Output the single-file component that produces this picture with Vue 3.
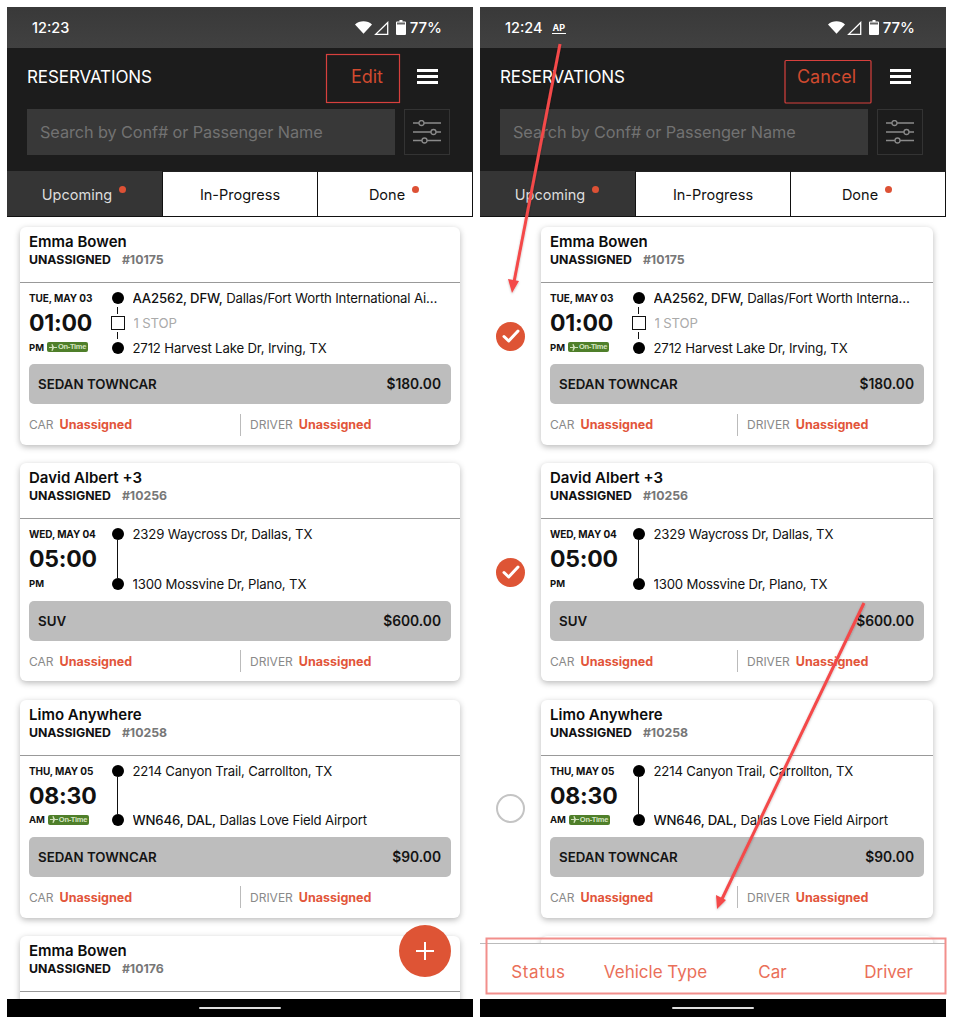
<script setup>
const reservations = [
  { id: 1, name: 'Emma Bowen', conf: '#10175', date: 'TUE, MAY 03', time: '01:00', ampm: 'PM', onTime: true,
    from: { bold: 'AA2562, DFW,', text: ' Dallas/Fort Worth International Airport' }, stop: '1 STOP',
    to: { bold: '', text: '2712 Harvest Lake Dr, Irving, TX' }, vehicle: 'SEDAN TOWNCAR', price: '$180.00', pick: 'on' },
  { id: 2, name: 'David Albert +3', conf: '#10256', date: 'WED, MAY 04', time: '05:00', ampm: 'PM', onTime: false,
    from: { bold: '', text: '2329 Waycross Dr, Dallas, TX' }, stop: '',
    to: { bold: '', text: '1300 Mossvine Dr, Plano, TX' }, vehicle: 'SUV', price: '$600.00', pick: 'on' },
  { id: 3, name: 'Limo Anywhere', conf: '#10258', date: 'THU, MAY 05', time: '08:30', ampm: 'AM', onTime: true,
    from: { bold: '', text: '2214 Canyon Trail, Carrollton, TX' }, stop: '',
    to: { bold: 'WN646, DAL,', text: ' Dallas Love Field Airport' }, vehicle: 'SEDAN TOWNCAR', price: '$90.00', pick: 'off' },
  { id: 4, name: 'Emma Bowen', conf: '#10176', peek: true, pick: 'none' },
]
const screens = [
  { id: 'list', clock: '12:23', editing: false },
  { id: 'edit', clock: '12:24', editing: true },
]
const tabs = [
  { label: 'Upcoming', dot: true, active: true },
  { label: 'In-Progress', dot: false, active: false },
  { label: 'Done', dot: true, active: false },
]
const actions = ['Status', 'Vehicle Type', 'Car', 'Driver']
</script>

<template>
  <div class="page">
    <section v-for="s in screens" :key="s.id" class="phone" :class="{ editing: s.editing }">
      <div class="status">
        <div class="clock">
          <span>{{ s.clock }}</span>
          <span v-if="s.editing" class="ap">AP</span>
        </div>
        <div class="sys">
          <svg width="17" height="13" viewBox="0 0 18 13"><path d="M0 3.400C2.400 1.300 5.500 0 9 0s6.600 1.300 9 3.400L9 13z" fill="#fff"/></svg>
          <svg class="sig" width="15" height="14" viewBox="0 0 15 14"><path d="M13.700 1.500V13.300H1.700z" fill="none" stroke="#fff" stroke-width="1.300"/></svg>
          <svg class="batt" width="10" height="15" viewBox="0 0 10 15"><path d="M3.500 0h3v1.500h2.500a1 1 0 0 1 1 1V14a1 1 0 0 1-1 1H1a1 1 0 0 1-1-1V2.500a1 1 0 0 1 1-1h2.500z" fill="#fff"/><rect x="1" y="2.500" width="8" height="2" fill="#666"/></svg>
          <span class="pct">77%</span>
        </div>
      </div>

      <header class="head">
        <div class="title-row">
          <h1>RESERVATIONS</h1>
          <button class="edit">{{ s.editing ? 'Cancel' : 'Edit' }}</button>
          <span class="burger"><i></i><i></i><i></i></span>
        </div>
        <div class="search-row">
          <div class="search">Search by Conf# or Passenger Name</div>
          <div class="filter">
            <svg width="30" height="24" viewBox="0 0 30 24" fill="none" stroke="#8a8a8a" stroke-width="1.300">
              <path d="M1 3h6M12 3h17M1 12h18M24 12h5M1 20.500h9M15 20.500h14"/>
              <circle cx="9.500" cy="3" r="2.500"/><circle cx="21.500" cy="12" r="2.500"/><circle cx="12.500" cy="20.500" r="2.500"/>
            </svg>
          </div>
        </div>
      </header>

      <nav class="tabs">
        <div v-for="t in tabs" :key="t.label" class="tab" :class="{ active: t.active, 'has-dot': t.dot }">
          {{ t.label }}<span v-if="t.dot" class="dot"></span>
        </div>
      </nav>

      <div class="list">
        <div v-for="r in reservations" :key="r.id" class="row">
          <div v-if="s.editing" class="pick">
            <span v-if="r.pick === 'on'" class="checked">
              <svg width="18" height="14" viewBox="0 0 18 14" fill="none"><path d="M2 7.500l4.700 4.500L16 2" stroke="#fff" stroke-width="3" stroke-linecap="round" stroke-linejoin="round"/></svg>
            </span>
            <span v-else-if="r.pick === 'off'" class="unchecked"></span>
          </div>
          <article class="card">
            <div v-if="!(r.peek && s.editing)" class="card-top">
              <div class="name">{{ r.name }}</div>
              <div class="meta"><b>UNASSIGNED</b><span>{{ r.conf }}</span></div>
            </div>
            <template v-if="!r.peek">
              <div class="trip">
                <div class="when">
                  <div class="date">{{ r.date }}</div>
                  <div class="time">{{ r.time }}</div>
                  <div class="ampm">
                    {{ r.ampm }}
                    <span v-if="r.onTime" class="ontime">
                      <svg width="8" height="7" viewBox="0 0 8 7"><path d="M0 3h3L2.500 0h1l1.500 3h3v1H5L3.500 7h-1L3 4H0z" fill="#cfe0b8"/></svg>
                      On-Time
                    </span>
                  </div>
                </div>
                <div class="route">
                  <div class="stopline">
                    <span class="pin"></span>
                    <span class="addr"><b>{{ r.from.bold }}</b>{{ r.from.text }}</span>
                  </div>
                  <div class="link" :class="{ long: !r.stop }">
                    <template v-if="r.stop">
                      <span class="square"></span>
                      <span class="addr muted">{{ r.stop }}</span>
                    </template>
                  </div>
                  <div class="stopline">
                    <span class="pin"></span>
                    <span class="addr"><b>{{ r.to.bold }}</b>{{ r.to.text }}</span>
                  </div>
                </div>
              </div>
              <div class="vehicle"><span>{{ r.vehicle }}</span><span class="price">{{ r.price }}</span></div>
              <div class="assign">
                <div class="slot"><span>CAR</span><strong>Unassigned</strong></div>
                <div class="slot second"><span>DRIVER</span><strong>Unassigned</strong></div>
              </div>
            </template>
          </article>
        </div>
      </div>

      <button v-if="!s.editing" class="fab" aria-label="Add">
        <svg width="20" height="20" viewBox="0 0 20 20"><path d="M10 1v18M1 10h18" stroke="#fff" stroke-width="2"/></svg>
      </button>

      <div v-if="s.editing" class="actions">
        <span v-for="a in actions" :key="a">{{ a }}</span>
      </div>

      <div class="navbar"><i></i></div>
    </section>

    <svg class="notes" width="953" height="1024" viewBox="0 0 953 1024" fill="none">
      <defs>
        <filter id="soft" x="-20%" y="-20%" width="140%" height="140%">
          <feDropShadow dx="0" dy="1" stdDeviation="1" flood-color="#000" flood-opacity=".25"/>
        </filter>
      </defs>
      <rect x="326.500" y="54.500" width="73" height="48" stroke="#d7403d" stroke-width="1.200"/>
      <rect x="785" y="60.500" width="86" height="42.500" rx="1" stroke="#d7403d" stroke-width="1.200"/>
      <rect x="486.500" y="938.500" width="459" height="55" stroke="#f28f8c" stroke-width="2"/>
      <g filter="url(#soft)">
        <path d="M560 44L514 282" stroke="#f4484a" stroke-width="3"/>
        <path d="M508 279l11 2-7 12z" fill="#f4484a"/>
        <path d="M864 603L722 899" stroke="#f4484a" stroke-width="3"/>
        <path d="M716 895l10 5-9 9z" fill="#f4484a"/>
      </g>
    </svg>
  </div>
</template>

<style>
html, body { margin: 0; background: #fff; }
</style>

<style scoped>
.page {
  position: relative;
  width: 953px;
  height: 1024px;
  padding: 7px;
  box-sizing: border-box;
  display: flex;
  gap: 7px;
  overflow: hidden;
  background: #fff;
  font-family: Inter, "Liberation Sans", sans-serif;
  color: #111;
}
.phone {
  position: relative;
  width: 466px;
  height: 1010px;
  flex: none;
  display: flex;
  flex-direction: column;
  overflow: hidden;
  background: #fff;
}
.status {
  height: 41px;
  flex: none;
  display: flex;
  align-items: center;
  justify-content: space-between;
  padding: 0 31px 0 25px;
  background: linear-gradient(#393939, #414141);
  color: #fff;
  font-size: 14.500px;
  font-weight: 500;
}
.clock { display: flex; align-items: center; gap: 9px; }
.ap {
  font-size: 9px;
  font-weight: 700;
  line-height: 11px;
  padding: 0 1px;
  border-bottom: 1.500px solid #fff;
}
.sys { display: flex; align-items: center; }
.sig { margin-left: 2px; }
.batt { margin-left: 7px; }
.pct { margin-left: 4px; font-size: 15px; }

.head {
  height: 123px;
  flex: none;
  box-sizing: border-box;
  background: #1c1c1c;
  padding: 0 23px 0 20px;
}
.title-row {
  height: 61px;
  box-sizing: border-box;
  padding-bottom: 4px;
  display: flex;
  align-items: center;
}
h1 {
  margin: 0;
  flex: 1;
  font-size: 17px;
  font-weight: 400;
  color: #fff;
  letter-spacing: -0.100px;
}
.edit {
  border: 0;
  padding: 0;
  background: none;
  color: #d04a2f;
  font: 400 18px Inter, "Liberation Sans", sans-serif;
  white-space: nowrap;
}
.burger {
  display: flex;
  flex-direction: column;
  gap: 2.750px;
  width: 21px;
  margin: 0 12px 0 34px;
}
.burger i { display: block; height: 3px; background: #fff; }
.search-row { display: flex; gap: 9px; height: 46px; }
.search {
  flex: 1;
  background: #383838;
  color: #727272;
  font-size: 16.300px;
  line-height: 46px;
  padding-left: 13px;
  letter-spacing: -0.100px;
}
.filter {
  width: 46px;
  box-sizing: border-box;
  border: 1px solid #333;
  display: flex;
  align-items: center;
  justify-content: center;
}

.tabs {
  height: 46px;
  flex: none;
  display: grid;
  grid-template-columns: 155px 155px 156px;
  box-sizing: border-box;
  border-bottom: 1px solid #111;
  background: #1c1c1c;
}
.tab {
  display: flex;
  align-items: center;
  justify-content: center;
  box-sizing: border-box;
  background: #fff;
  border-top: 1px solid #222;
  border-left: 1px solid #111;
  font-size: 14.500px;
  color: #111;
}
.tab:last-child { border-right: 1px solid #111; }
.tab.has-dot { padding-right: 2px; }
.tab.active { background: #353535; color: #ddd; border-color: #353535; }
.dot {
  width: 7px;
  height: 7px;
  border-radius: 50%;
  background: #dd5135;
  margin: -9px 0 0 7px;
}

.list {
  flex: 1;
  min-height: 0;
  overflow: hidden;
  padding: 10px 13px 0;
  display: flex;
  flex-direction: column;
  gap: 18.400px;
}
.row { display: flex; flex: none; }
.editing .list { padding-left: 0; }
.pick {
  width: 61px;
  flex: none;
  display: flex;
  align-items: center;
  justify-content: center;
}
.checked {
  width: 29px;
  height: 29px;
  border-radius: 50%;
  background: #de5435;
  display: flex;
  align-items: center;
  justify-content: center;
}
.unchecked {
  width: 29px;
  height: 29px;
  box-sizing: border-box;
  border-radius: 50%;
  border: 2.500px solid #c4c4c4;
}
.card {
  flex: 1;
  min-width: 0;
  height: 218px;
  border-radius: 6px;
  background: #fff;
  box-shadow: 0 2px 6px rgba(0, 0, 0, .28);
  display: flex;
  flex-direction: column;
}
.card-top {
  height: 56px;
  flex: none;
  box-sizing: border-box;
  border-bottom: 1.500px solid #999;
  padding: 6px 9px 0;
}
.name { font-size: 15px; font-weight: 600; line-height: 17px; color: #0c0c0c; }
.meta { margin-top: 1px; font-size: 12.300px; line-height: 17px; }
.meta b { font-weight: 700; }
.meta span { margin-left: 11px; font-weight: 700; color: #777; }

.trip { display: flex; padding: 7px 9px 0; height: 81.300px; flex: none; box-sizing: border-box; }
.when { width: 82px; flex: none; }
.date { font-size: 10px; font-weight: 700; line-height: 14px; margin-top: 1px; letter-spacing: -.1px; white-space: nowrap; }
.time { font-size: 23px; font-weight: 700; line-height: 28px; margin-top: 4px; letter-spacing: -.2px; }
.ampm { display: flex; align-items: center; gap: 3px; font-size: 9.500px; font-weight: 700; line-height: 13px; margin-top: 3.500px; }
.ontime {
  display: inline-flex;
  align-items: center;
  gap: 1px;
  height: 10px;
  width: 41px;
  justify-content: center;
  border-radius: 2px;
  background: #4f7f2a;
  color: #d6e6c2;
  font: 700 7.500px/10px "Liberation Sans", sans-serif;
  letter-spacing: -.3px;
  white-space: nowrap;
}
.route { flex: 1; min-width: 0; }
.stopline, .link { display: flex; align-items: center; }
.stopline { height: 16px; }
.pin { width: 12px; height: 12px; border-radius: 50%; background: #000; flex: none; margin-left: .5px; }
.addr {
  margin-left: 9px;
  padding-right: 10px;
  min-width: 0;
  flex: 1;
  overflow: hidden;
  white-space: nowrap;
  text-overflow: ellipsis;
  font-size: 13.200px;
  letter-spacing: -.17px;
  line-height: 16px;
}
.addr b { font-weight: 500; }
.muted { color: #aaa; margin-left: 9px; }
.link {
  position: relative;
  height: 33.500px;
}
.link::before {
  content: "";
  position: absolute;
  left: 5.800px;
  top: 1px;
  bottom: 1px;
  width: 1.500px;
  background: #111;
}
.link.long::before { top: -2px; bottom: -2px; }
.square {
  position: relative;
  width: 13.500px;
  height: 13.500px;
  box-sizing: border-box;
  border: 1.500px solid #111;
  background: #fff;
  box-shadow: 0 0 0 2px #fff;
  flex: none;
}

.vehicle {
  margin: 0 9px;
  height: 40px;
  flex: none;
  box-sizing: border-box;
  padding: 0 10px 0 9px;
  border-radius: 5px;
  background: #bdbdbd;
  display: flex;
  align-items: center;
  justify-content: space-between;
  font-size: 13.300px;
  font-weight: 600;
  color: #141414;
}
.price { font-size: 13.800px; }
.assign { display: flex; align-items: center; flex: 1; padding: 0 9px; }
.slot { display: flex; align-items: center; gap: 6px; font-size: 12px; color: #8a8a8a; width: 211px; flex: none; height: 22px; }
.editing .slot { width: 187px; }
.slot strong { color: #e2553a; font-weight: 700; font-size: 12.500px; }
.slot.second { border-left: 1.500px solid #bbb; padding-left: 9px; box-sizing: border-box; }

.fab {
  position: absolute;
  right: 22px;
  bottom: 40px;
  width: 52px;
  height: 52px;
  border: 0;
  padding: 0;
  border-radius: 50%;
  background: #de5435;
  display: flex;
  align-items: center;
  justify-content: center;
}
.actions {
  flex: none;
  height: 56px;
  background: #fff;
  border-top: 1px solid #bbb;
  box-sizing: border-box;
  display: grid;
  grid-template-columns: 117px 117px 117px 115px;
  align-items: center;
  justify-items: center;
  color: #ea6f59;
  font-size: 17px;
  padding-top: 1px;
}
.actions span:first-child { letter-spacing: .6px; }
.navbar {
  height: 18px;
  flex: none;
  background: #000;
  display: flex;
  align-items: center;
  justify-content: center;
}
.navbar i { display: block; width: 82px; height: 2.500px; border-radius: 2px; background: #ddd; }
.notes { position: absolute; left: 0; top: 0; pointer-events: none; }
</style>
